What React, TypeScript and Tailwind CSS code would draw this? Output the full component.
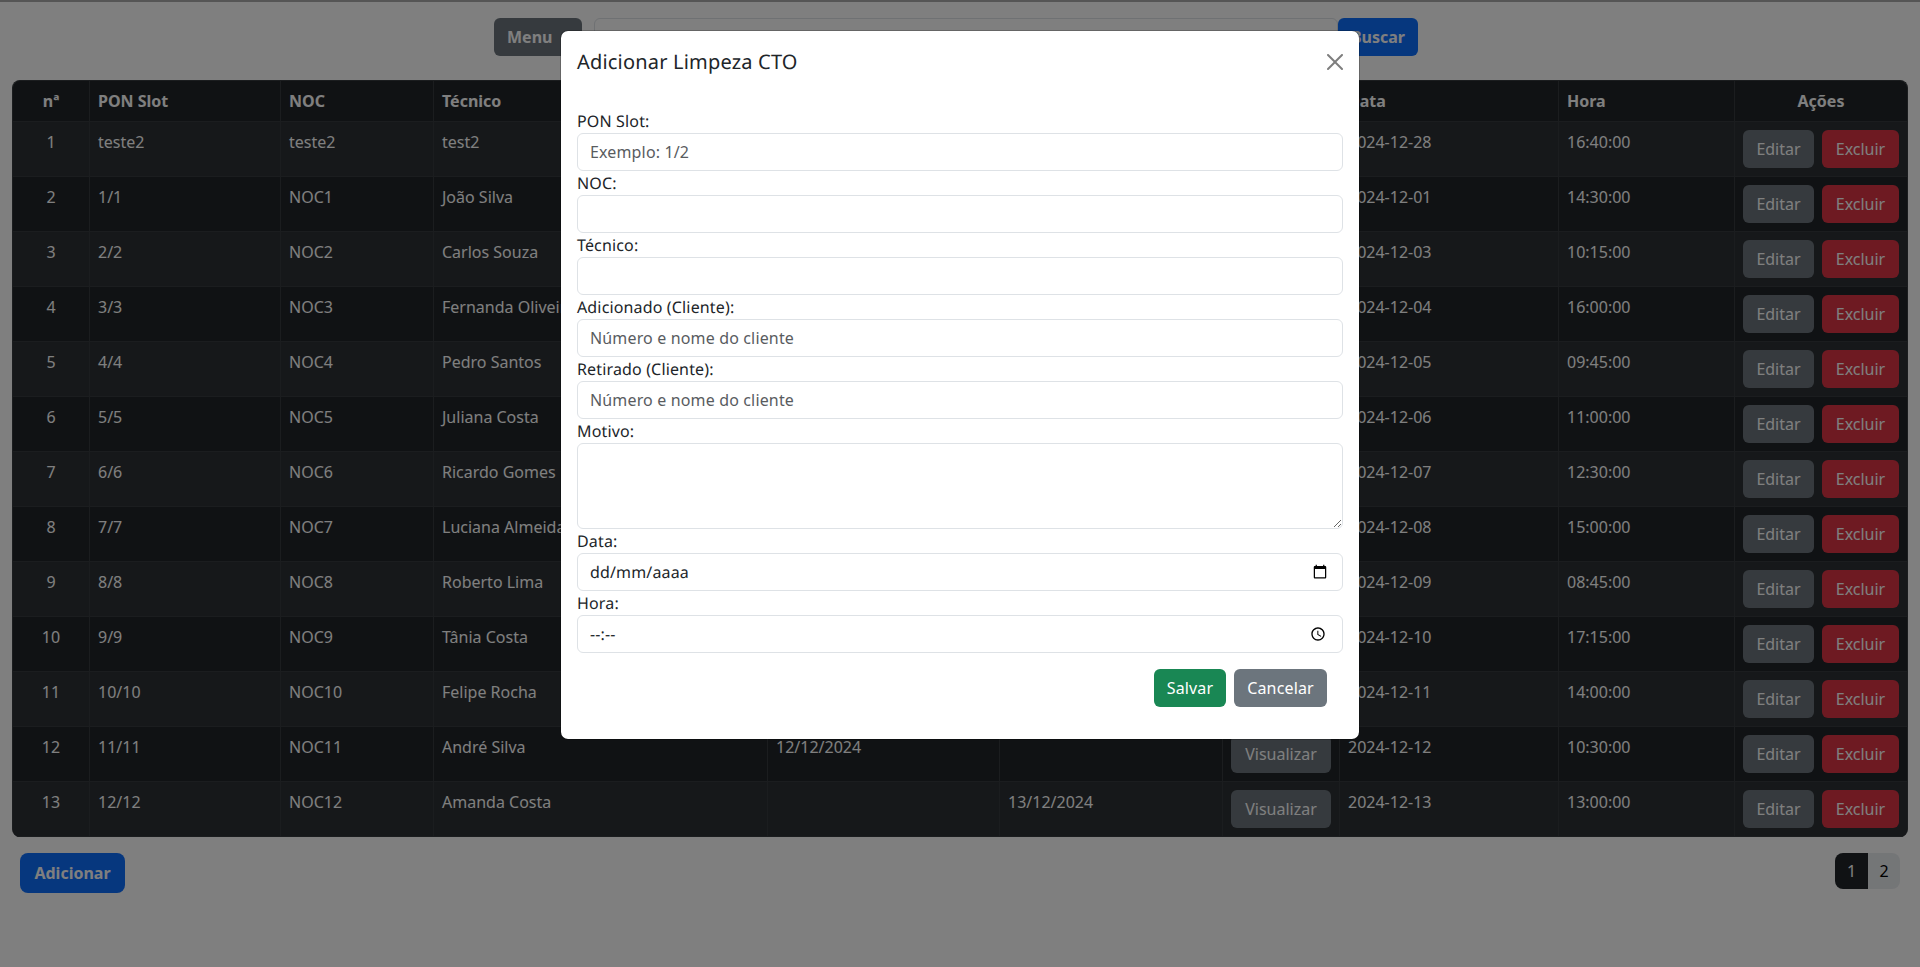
const rows = [
  ['1', 'teste2', 'teste2', 'test2', '', '', '2024-12-28', '16:40:00'],
  ['2', '1/1', 'NOC1', 'João Silva', '', '', '2024-12-01', '14:30:00'],
  ['3', '2/2', 'NOC2', 'Carlos Souza', '', '', '2024-12-03', '10:15:00'],
  ['4', '3/3', 'NOC3', 'Fernanda Oliveira', '', '', '2024-12-04', '16:00:00'],
  ['5', '4/4', 'NOC4', 'Pedro Santos', '', '', '2024-12-05', '09:45:00'],
  ['6', '5/5', 'NOC5', 'Juliana Costa', '', '', '2024-12-06', '11:00:00'],
  ['7', '6/6', 'NOC6', 'Ricardo Gomes', '', '', '2024-12-07', '12:30:00'],
  ['8', '7/7', 'NOC7', 'Luciana Almeida', '', '', '2024-12-08', '15:00:00'],
  ['9', '8/8', 'NOC8', 'Roberto Lima', '', '', '2024-12-09', '08:45:00'],
  ['10', '9/9', 'NOC9', 'Tânia Costa', '', '', '2024-12-10', '17:15:00'],
  ['11', '10/10', 'NOC10', 'Felipe Rocha', '', '', '2024-12-11', '14:00:00'],
  ['12', '11/11', 'NOC11', 'André Silva', '12/12/2024', '', '2024-12-12', '10:30:00'],
  ['13', '12/12', 'NOC12', 'Amanda Costa', '', '13/12/2024', '2024-12-13', '13:00:00'],
];

const btn = 'h-[38px] rounded-md border border-transparent text-base leading-6';
const cell = 'border-r border-b border-[#373b3e] px-2 py-2 align-top last:border-r-0';
const label = 'block text-base leading-6 tracking-[0.15px] text-[#212529]';
const field = 'block h-[38px] w-full rounded-md border border-[#dee2e6] bg-white px-3 text-base tracking-[0.15px] text-[#212529] outline-none placeholder:text-[#595c5f]';

function Field({ text, placeholder }: { text: string; placeholder?: string }) {
  return (
    <div>
      <label className={label}>{text}</label>
      <input type="text" placeholder={placeholder} className={field} />
    </div>
  );
}

// o navegador do print estava em pt-BR, entao a mascara do campo vai por cima
function NativeField({ text, type, mask }: { text: string; type: string; mask: string }) {
  return (
    <div>
      <label className={label}>{text}</label>
      <div className="relative">
        <input type={type} className={`${field} [&::-webkit-datetime-edit]:opacity-0`} />
        <span className="pointer-events-none absolute top-[7px] left-[13px] text-base leading-6 tracking-[0.15px]">{mask}</span>
      </div>
    </div>
  );
}

export default function App() {
  return (
    <div className="relative h-[967px] overflow-hidden bg-white font-['Noto_Sans',sans-serif] text-white">
      <div className="h-[2px] bg-[#aaaaaa]" />
      {/* busca */}
      <div className="flex justify-center gap-3 pt-4 pr-2">
        <button className={`${btn} w-[88px] bg-[#6c757d] pl-3 text-left font-bold`}>Menu</button>
        <input className="h-[38px] w-[744px] rounded-md border border-[#dee2e6] bg-white" />
        <button className={`${btn} -ml-3 w-[80px] bg-[#0d6efd] font-bold`}>Buscar</button>
      </div>

      {/* tabela */}
      <div className="mx-3 mt-6 overflow-hidden rounded-lg border border-b-0 border-[#373b3e] bg-[#212529]">
        <table className="w-full table-fixed border-separate border-spacing-0 text-base leading-6">
          <thead>
            <tr>
              <th className={`${cell} w-[77px] text-center font-bold`}>nª</th>
              <th className={`${cell} w-[191px] text-left font-bold`}>PON Slot</th>
              <th className={`${cell} w-[153px] text-left font-bold`}>NOC</th>
              <th className={`${cell} w-[334px] text-left font-bold`}>Técnico</th>
              <th className={`${cell} w-[232px] text-left font-bold`}>Adicionado</th>
              <th className={`${cell} w-[223px] text-left font-bold`}>Retirado</th>
              <th className={`${cell} w-[117px] text-center font-bold`}>Motivo</th>
              <th className={`${cell} w-[219px] text-left font-bold`}>Data</th>
              <th className={`${cell} w-[176px] text-left font-bold`}>Hora</th>
              <th className={`${cell} text-center font-bold`}>Ações</th>
            </tr>
          </thead>
          <tbody>
            {rows.map((r, i) => (
              <tr key={r[0]} className={i % 2 === 0 ? 'bg-[#2c3034]' : ''}>
                <td className={`${cell} text-center`}>{r[0]}</td>
                <td className={cell}>{r[1]}</td>
                <td className={cell}>{r[2]}</td>
                <td className={cell}>{r[3]}</td>
                <td className={cell}>{r[4]}</td>
                <td className={cell}>{r[5]}</td>
                <td className={`${cell} text-center`}>
                  <button className={`${btn} w-[100px] bg-[#6c757d]`}>Visualizar</button>
                </td>
                <td className={cell}>{r[6]}</td>
                <td className={cell}>{r[7]}</td>
                <td className={cell}>
                  <div className="flex gap-2">
                    <button className={`${btn} w-[71px] bg-[#6c757d]`}>Editar</button>
                    <button className={`${btn} w-[77px] bg-[#dc3545]`}>Excluir</button>
                  </div>
                </td>
              </tr>
            ))}
          </tbody>
        </table>
      </div>

      {/* rodape da tabela */}
      <div className="mt-4 flex items-start justify-between pr-5 pl-5">
        <button className="h-10 w-[105px] rounded-lg bg-[#0d6efd] text-base font-bold">Adicionar</button>
        <div className="flex h-9 overflow-hidden rounded-lg text-base leading-9">
          <span className="w-[33px] bg-[#212529] text-center">1</span>
          <span className="w-8 bg-[#e9ecef] text-center text-black">2</span>
        </div>
      </div>

      {/* overlay */}
      <div className="absolute inset-0 bg-black/50" />

      {/* modal */}
      <div className="absolute top-[30px] left-[560px] w-[800px] rounded-lg border border-black/20 bg-white bg-clip-padding text-[#212529] [text-rendering:geometricPrecision]">
        <div className="flex h-[62px] items-center justify-between px-4">
          <h5 className="text-xl leading-[30px] font-normal tracking-[0.19px]">Adicionar Limpeza CTO</h5>
          <svg width="16" height="16" viewBox="0 0 16 16" className="opacity-50">
            <path d="M.293.293a1 1 0 0 1 1.414 0L8 6.586 14.293.293a1 1 0 1 1 1.414 1.414L9.414 8l6.293 6.293a1 1 0 0 1-1.414 1.414L8 9.414l-6.293 6.293a1 1 0 0 1-1.414-1.414L6.586 8 .293 1.707a1 1 0 0 1 0-1.414z" />
          </svg>
        </div>
        <div className="p-4">
          <Field text="PON Slot:" placeholder="Exemplo: 1/2" />
          <Field text="NOC:" />
          <Field text="Técnico:" />
          <Field text="Adicionado (Cliente):" placeholder="Número e nome do cliente" />
          <Field text="Retirado (Cliente):" placeholder="Número e nome do cliente" />
          <div>
            <label className={label}>Motivo:</label>
            <textarea rows={3} className="block h-[86px] w-full rounded-md border border-[#dee2e6] px-3 py-1.5 outline-none" />
          </div>
          <NativeField text="Data:" type="date" mask="dd/mm/aaaa" />
          <NativeField text="Hora:" type="time" mask="--:--" />
          <div className="flex justify-end gap-2 p-4 pb-0">
            <button className={`${btn} w-[72px] bg-[#198754] tracking-[0.15px] text-white`}>Salvar</button>
            <button className={`${btn} w-[93px] bg-[#6c757d] tracking-[0.15px] text-white`}>Cancelar</button>
          </div>
        </div>
        <div className="h-4" />
      </div>
    </div>
  );
}
